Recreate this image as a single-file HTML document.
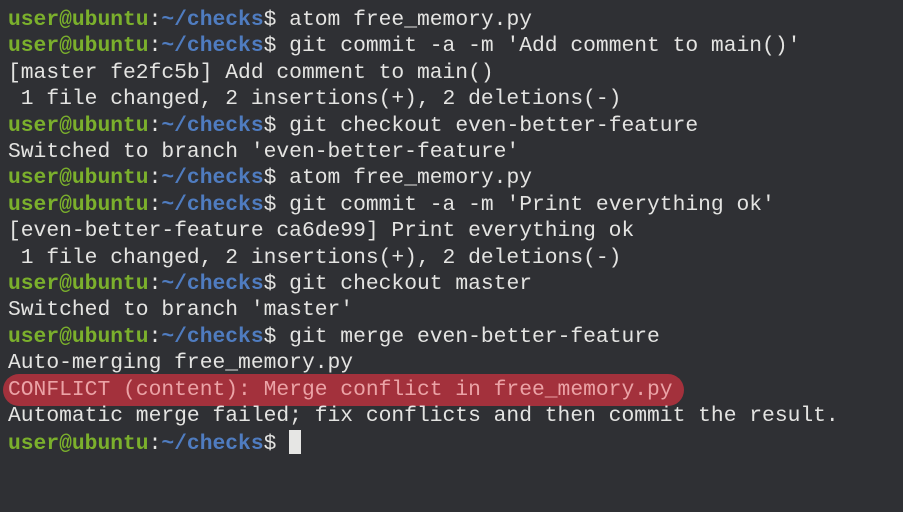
<!DOCTYPE html>
<html><head><style>
html,body{margin:0;padding:0;width:903px;height:512px;background:#2f3034;overflow:hidden}
pre{margin:0;position:absolute;left:8px;top:7px;font-family:"Liberation Mono",monospace;font-size:21.3px;line-height:26.4px;color:#e4e4e2;white-space:pre}
.g{color:#7bb02c;font-weight:bold}.b{color:#4f7cc0;font-weight:bold}.w{font-weight:bold}
.hl{position:absolute;left:3px;top:374px;width:681px;height:32px;background:#a3313c;border-radius:16px}
.r{color:#eba3a6}
.cur{display:inline-block;width:12px;height:24px;background:#e6e6e4;vertical-align:-5px}
</style></head><body>
<div class="hl"></div>
<pre><span class="g">user@ubuntu</span>:<span class="b">~/checks</span>$ atom free_memory.py
<span class="g">user@ubuntu</span>:<span class="b">~/checks</span>$ git commit -a -m 'Add comment to main()'
[master fe2fc5b] Add comment to main()
 1 file changed, 2 insertions(+), 2 deletions(-)
<span class="g">user@ubuntu</span>:<span class="b">~/checks</span>$ git checkout even-better-feature
Switched to branch 'even-better-feature'
<span class="g">user@ubuntu</span>:<span class="b">~/checks</span>$ atom free_memory.py
<span class="g">user@ubuntu</span>:<span class="b">~/checks</span>$ git commit -a -m 'Print everything ok'
[even-better-feature ca6de99] Print everything ok
 1 file changed, 2 insertions(+), 2 deletions(-)
<span class="g">user@ubuntu</span>:<span class="b">~/checks</span>$ git checkout master
Switched to branch 'master'
<span class="g">user@ubuntu</span>:<span class="b">~/checks</span>$ git merge even-better-feature
Auto-merging free_memory.py
<span class="r">CONFLICT (content): Merge conflict in free_memory.py</span>
Automatic merge failed; fix conflicts and then commit the result.
<span class="g">user@ubuntu</span>:<span class="b">~/checks</span>$ <span class="cur"></span></pre>
</body></html>
